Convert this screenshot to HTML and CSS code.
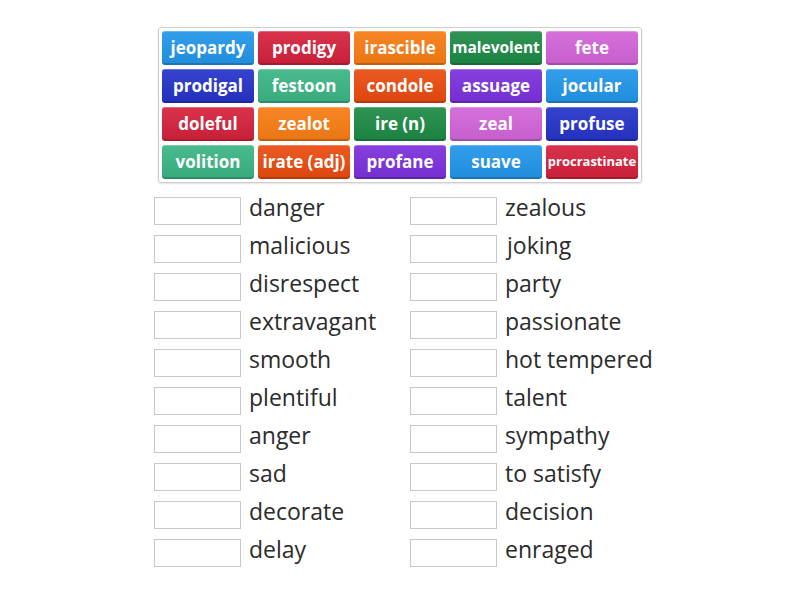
FILE: index.html
```
<!DOCTYPE html>
<html>
<head>
<meta charset="utf-8">
<link rel="stylesheet" href="styles.css">
</head>
<body>
<div class="page">
  <div class="bank">
    <div class="tile c-blue">jeopardy</div>
    <div class="tile c-red">prodigy</div>
    <div class="tile c-orange">irascible</div>
    <div class="tile c-dgreen small">malevolent</div>
    <div class="tile c-orchid">fete</div>
    <div class="tile c-navy">prodigal</div>
    <div class="tile c-teal">festoon</div>
    <div class="tile c-ored">condole</div>
    <div class="tile c-purple">assuage</div>
    <div class="tile c-blue">jocular</div>
    <div class="tile c-red">doleful</div>
    <div class="tile c-orange">zealot</div>
    <div class="tile c-dgreen">ire (n)</div>
    <div class="tile c-orchid">zeal</div>
    <div class="tile c-navy">profuse</div>
    <div class="tile c-teal">volition</div>
    <div class="tile c-ored">irate (adj)</div>
    <div class="tile c-purple">profane</div>
    <div class="tile c-blue">suave</div>
    <div class="tile c-red tiny">procrastinate</div>
  </div>
  <div class="answers">
    <div class="row"><div class="slot"></div><span class="label">danger</span></div>
    <div class="row"><div class="slot"></div><span class="label">zealous</span></div>
    <div class="row"><div class="slot"></div><span class="label">malicious</span></div>
    <div class="row"><div class="slot"></div><span class="label nudge">joking</span></div>
    <div class="row"><div class="slot"></div><span class="label">disrespect</span></div>
    <div class="row"><div class="slot"></div><span class="label">party</span></div>
    <div class="row"><div class="slot"></div><span class="label">extravagant</span></div>
    <div class="row"><div class="slot"></div><span class="label">passionate</span></div>
    <div class="row"><div class="slot"></div><span class="label">smooth</span></div>
    <div class="row"><div class="slot"></div><span class="label">hot tempered</span></div>
    <div class="row"><div class="slot"></div><span class="label">plentiful</span></div>
    <div class="row"><div class="slot"></div><span class="label">talent</span></div>
    <div class="row"><div class="slot"></div><span class="label">anger</span></div>
    <div class="row"><div class="slot"></div><span class="label">sympathy</span></div>
    <div class="row"><div class="slot"></div><span class="label">sad</span></div>
    <div class="row"><div class="slot"></div><span class="label">to satisfy</span></div>
    <div class="row"><div class="slot"></div><span class="label">decorate</span></div>
    <div class="row"><div class="slot"></div><span class="label">decision</span></div>
    <div class="row"><div class="slot"></div><span class="label">delay</span></div>
    <div class="row"><div class="slot"></div><span class="label">enraged</span></div>
  </div>
</div>
</body>
</html>
```
FILE: styles.css
```
html, body {
  margin: 0;
  padding: 0;
  background: #ffffff;
}

body {
  font-family: "Open Sans", "Liberation Sans", sans-serif;
  width: 800px;
  height: 600px;
  overflow: hidden;
}

.page {
  padding-top: 27px;
  display: flex;
  flex-direction: column;
}

.bank {
  margin-left: 158px;
  width: 476px;
  padding: 3px;
  border: 1px solid #cfcfcf;
  border-radius: 3px;
  box-shadow: 0 1px 2px rgba(0, 0, 0, 0.12);
  display: grid;
  grid-template-columns: repeat(5, 92px);
  grid-auto-rows: 34px;
  gap: 4px;
}

.tile {
  border-radius: 3px;
  color: #ffffff;
  font-weight: 700;
  font-size: 17px;
  display: flex;
  align-items: center;
  justify-content: center;
  white-space: nowrap;
  box-shadow: inset 0 1px 0 rgba(255, 255, 255, 0.25), inset 0 -2px 0 rgba(0, 0, 0, 0.18);
  background-image: linear-gradient(to bottom, rgba(255, 255, 255, 0.08), rgba(0, 0, 0, 0.06));
  padding-bottom: 2px;
  box-sizing: border-box;
}

.tile.small { font-size: 15.5px; }
.tile.tiny { font-size: 13px; }

.c-blue { background-color: #2196ea; }
.c-red { background-color: #d5213c; }
.c-orange { background-color: #f87c13; }
.c-dgreen { background-color: #1d8a45; }
.c-orchid { background-color: #d264d8; }
.c-navy { background-color: #2533c9; }
.c-teal { background-color: #3bb584; }
.c-ored { background-color: #ea4b0f; }
.c-purple { background-color: #7c30dc; }

.answers {
  margin-top: 14px;
  margin-left: 154px;
  display: grid;
  grid-template-columns: 256px 256px;
  grid-auto-rows: 28px;
  row-gap: 10px;
}

.row {
  display: flex;
  align-items: flex-start;
}

.slot {
  width: 87px;
  height: 28px;
  box-sizing: border-box;
  border: 1px solid #c8c8c8;
  background: #ffffff;
  flex: none;
}

.label {
  margin-left: 8px;
  margin-top: -4px;
  font-size: 23px;
  line-height: 28px;
  color: #2b2b2b;
  white-space: nowrap;
}

.label.nudge { margin-left: 10px; }
```
